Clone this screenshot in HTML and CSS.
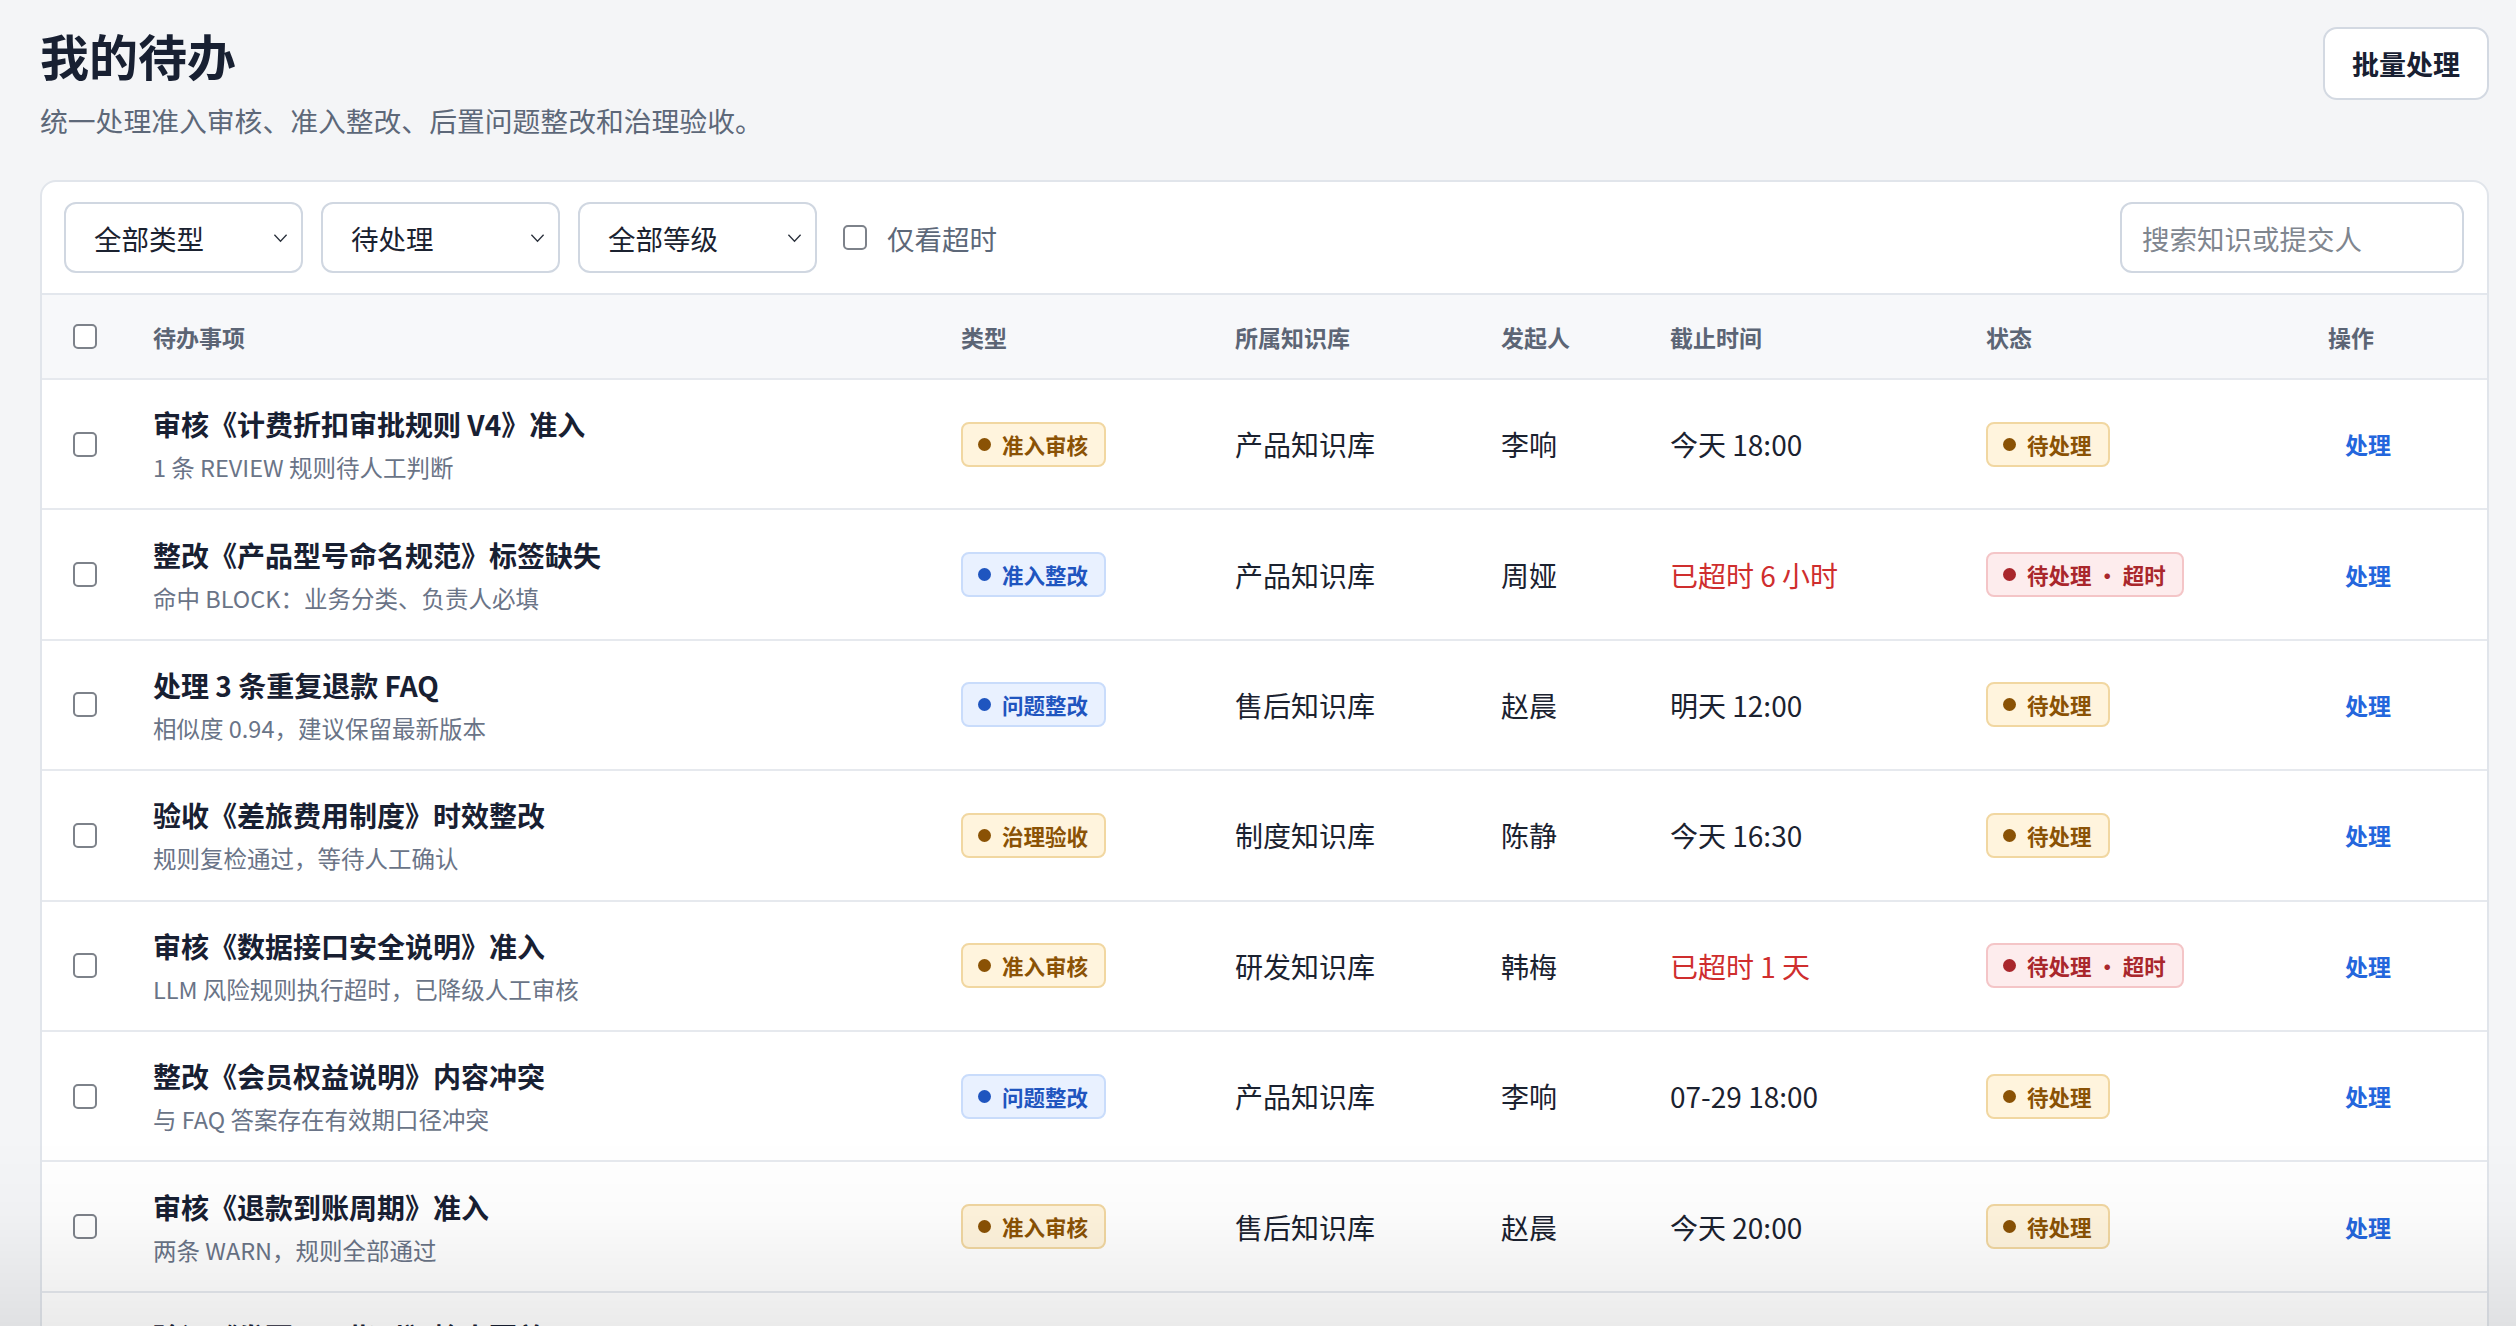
FILE: index.html
```html
<!DOCTYPE html>
<html lang="zh-CN">
<head>
<meta charset="utf-8">
<title>我的待办</title>
<link rel="stylesheet" href="styles.css">
</head>
<body>
<div class="page">
  <header class="page-head">
    <div class="head-text">
      <h1 class="title">我的待办</h1>
      <p class="subtitle">统一处理准入审核、准入整改、后置问题整改和治理验收。</p>
    </div>
    <button class="btn">批量处理</button>
  </header>

  <section class="card">
    <div class="filters">
      <div class="select"><span>全部类型</span><svg class="chev" viewBox="0 0 16 10"><polyline points="1.5,1.5 8,8.5 14.5,1.5"/></svg></div>
      <div class="select"><span>待处理</span><svg class="chev" viewBox="0 0 16 10"><polyline points="1.5,1.5 8,8.5 14.5,1.5"/></svg></div>
      <div class="select"><span>全部等级</span><svg class="chev" viewBox="0 0 16 10"><polyline points="1.5,1.5 8,8.5 14.5,1.5"/></svg></div>
      <label class="only-overdue"><span class="cb"></span>仅看超时</label>
      <div class="search">搜索知识或提交人</div>
    </div>

    <div class="row head-row">
      <div class="c-check"><span class="cb"></span></div>
      <div>待办事项</div>
      <div>类型</div>
      <div>所属知识库</div>
      <div>发起人</div>
      <div>截止时间</div>
      <div>状态</div>
      <div>操作</div>
    </div>

    <div class="row">
      <div class="c-check"><span class="cb"></span></div>
      <div class="item"><div class="item-title">审核《计费折扣审批规则 V4》准入</div><div class="item-sub">1 条 REVIEW 规则待人工判断</div></div>
      <div><span class="badge amber"><i></i>准入审核</span></div>
      <div class="cell">产品知识库</div>
      <div class="cell">李响</div>
      <div class="cell">今天 18:00</div>
      <div><span class="badge amber"><i></i>待处理</span></div>
      <div><a class="act">处理</a></div>
    </div>

    <div class="row">
      <div class="c-check"><span class="cb"></span></div>
      <div class="item"><div class="item-title">整改《产品型号命名规范》标签缺失</div><div class="item-sub">命中 BLOCK：业务分类、负责人必填</div></div>
      <div><span class="badge blue"><i></i>准入整改</span></div>
      <div class="cell">产品知识库</div>
      <div class="cell">周娅</div>
      <div class="cell overdue">已超时 6 小时</div>
      <div><span class="badge red"><i></i>待处理 · 超时</span></div>
      <div><a class="act">处理</a></div>
    </div>

    <div class="row">
      <div class="c-check"><span class="cb"></span></div>
      <div class="item"><div class="item-title">处理 3 条重复退款 FAQ</div><div class="item-sub">相似度 0.94，建议保留最新版本</div></div>
      <div><span class="badge blue"><i></i>问题整改</span></div>
      <div class="cell">售后知识库</div>
      <div class="cell">赵晨</div>
      <div class="cell">明天 12:00</div>
      <div><span class="badge amber"><i></i>待处理</span></div>
      <div><a class="act">处理</a></div>
    </div>

    <div class="row">
      <div class="c-check"><span class="cb"></span></div>
      <div class="item"><div class="item-title">验收《差旅费用制度》时效整改</div><div class="item-sub">规则复检通过，等待人工确认</div></div>
      <div><span class="badge amber"><i></i>治理验收</span></div>
      <div class="cell">制度知识库</div>
      <div class="cell">陈静</div>
      <div class="cell">今天 16:30</div>
      <div><span class="badge amber"><i></i>待处理</span></div>
      <div><a class="act">处理</a></div>
    </div>

    <div class="row">
      <div class="c-check"><span class="cb"></span></div>
      <div class="item"><div class="item-title">审核《数据接口安全说明》准入</div><div class="item-sub">LLM 风险规则执行超时，已降级人工审核</div></div>
      <div><span class="badge amber"><i></i>准入审核</span></div>
      <div class="cell">研发知识库</div>
      <div class="cell">韩梅</div>
      <div class="cell overdue">已超时 1 天</div>
      <div><span class="badge red"><i></i>待处理 · 超时</span></div>
      <div><a class="act">处理</a></div>
    </div>

    <div class="row">
      <div class="c-check"><span class="cb"></span></div>
      <div class="item"><div class="item-title">整改《会员权益说明》内容冲突</div><div class="item-sub">与 FAQ 答案存在有效期口径冲突</div></div>
      <div><span class="badge blue"><i></i>问题整改</span></div>
      <div class="cell">产品知识库</div>
      <div class="cell">李响</div>
      <div class="cell">07-29 18:00</div>
      <div><span class="badge amber"><i></i>待处理</span></div>
      <div><a class="act">处理</a></div>
    </div>

    <div class="row">
      <div class="c-check"><span class="cb"></span></div>
      <div class="item"><div class="item-title">审核《退款到账周期》准入</div><div class="item-sub">两条 WARN，规则全部通过</div></div>
      <div><span class="badge amber"><i></i>准入审核</span></div>
      <div class="cell">售后知识库</div>
      <div class="cell">赵晨</div>
      <div class="cell">今天 20:00</div>
      <div><span class="badge amber"><i></i>待处理</span></div>
      <div><a class="act">处理</a></div>
    </div>

    <div class="row">
      <div class="c-check"><span class="cb"></span></div>
      <div class="item"><div class="item-title">验证《发票开具指引》检索覆盖</div><div class="item-sub">召回率低于阈值，需补充同义词</div></div>
      <div><span class="badge amber"><i></i>治理验收</span></div>
      <div class="cell">财务知识库</div>
      <div class="cell">陈静</div>
      <div class="cell">明天 18:00</div>
      <div><span class="badge amber"><i></i>待处理</span></div>
      <div><a class="act">处理</a></div>
    </div>
  </section>
</div>
<div class="fade"></div>
</body>
</html>
```

FILE: styles.css
```css
* { box-sizing: border-box; }
html, body {
  margin: 0;
  height: 100%;
  overflow: hidden;
  background: #f4f5f7;
  font-family: "Noto Sans CJK SC", "Noto Sans", "Liberation Sans", sans-serif;
  color: #1b2230;
}
.page {
  padding: 25px 27px 0 40px;
}
.page-head {
  display: flex;
  justify-content: space-between;
  align-items: flex-start;
}
.title {
  margin: 0;
  font-size: 49px;
  line-height: 60px;
  font-weight: 700;
  color: #182032;
}
.subtitle {
  margin: 17px 0 0;
  font-size: 27.8px;
  line-height: 36px;
  color: #5d6879;
}
.btn {
  margin-top: 2px;
  height: 73px;
  padding: 0 27px;
  border: 2px solid #d3d9e2;
  border-radius: 14px;
  background: #fff;
  font-family: inherit;
  font-size: 27px;
  font-weight: 700;
  color: #182032;
}
.card {
  margin-top: 42px;
  background: #fff;
  border: 2px solid #e1e5eb;
  border-radius: 16px;
  overflow: hidden;
}
.filters {
  display: flex;
  align-items: center;
  gap: 18px;
  padding: 20px 23px 20px 22px;
  border-bottom: 2px solid #e3e7ed;
}
.select {
  width: 239px;
  height: 71px;
  border: 2px solid #d0d7e1;
  border-radius: 12px;
  display: flex;
  align-items: center;
  justify-content: space-between;
  padding: 0 13px 0 28px;
  font-size: 27.5px;
  color: #1b2230;
}
.chev {
  width: 15px;
  height: 10px;
  fill: none;
  stroke: #2a303b;
  stroke-width: 1.4;
}
.only-overdue {
  display: flex;
  align-items: center;
  gap: 20px;
  margin-left: 8px;
  font-size: 27.5px;
  color: #5d6879;
}
.cb {
  display: inline-block;
  width: 24px;
  height: 25px;
  border: 2px solid #7d828a;
  border-radius: 5px;
  background: #fff;
}
.search {
  margin-left: auto;
  width: 344px;
  height: 71px;
  border: 2px solid #d0d7e1;
  border-radius: 12px;
  display: flex;
  align-items: center;
  padding: 0 20px;
  font-size: 27.5px;
  color: #80868f;
}
.row {
  display: grid;
  grid-template-columns: 111px 808px 274px 266px 169px 316px 342px 1fr;
  align-items: center;
  height: 130.4px;
  border-bottom: 2px solid #e6e9ee;
}
.head-row {
  height: 85px;
  background: #f7f8fa;
  font-size: 23px;
  font-weight: 700;
  color: #5c6575;
}
.c-check {
  padding-left: 31px;
  display: flex;
  align-items: center;
}
.item-title {
  font-size: 28px;
  line-height: 38px;
  font-weight: 700;
  color: #182032;
}
.item-sub {
  margin-top: 8px;
  font-size: 23.5px;
  line-height: 32px;
  color: #6a7487;
}
.cell {
  font-size: 28px;
  color: #1b2230;
}
.cell.overdue { color: #cf2e2e; }
.badge {
  display: inline-flex;
  align-items: center;
  gap: 11px;
  height: 45px;
  padding: 0 16px 0 15px;
  border: 2px solid;
  border-radius: 8px;
  font-size: 21.5px;
  font-weight: 700;
}
.badge i {
  display: inline-block;
  width: 13px;
  height: 13px;
  border-radius: 50%;
  background: currentColor;
}
.badge.amber { background: #fff4dd; border-color: #f1d7a1; color: #8a5205; }
.badge.blue { background: #e9f1ff; border-color: #c9dcfb; color: #1f55bf; }
.badge.red { background: #fdeced; border-color: #f4c5c7; color: #a9272c; }
.act {
  display: inline-block;
  padding: 0 17px;
  font-size: 23px;
  font-weight: 700;
  color: #2466dc;
  cursor: pointer;
}
.fade {
  position: fixed;
  left: 0;
  right: 0;
  bottom: 0;
  height: 190px;
  pointer-events: none;
  background: linear-gradient(to bottom, rgba(0,0,0,0) 0%, rgba(0,0,0,0.015) 40%, rgba(0,0,0,0.08) 100%);
}
```
